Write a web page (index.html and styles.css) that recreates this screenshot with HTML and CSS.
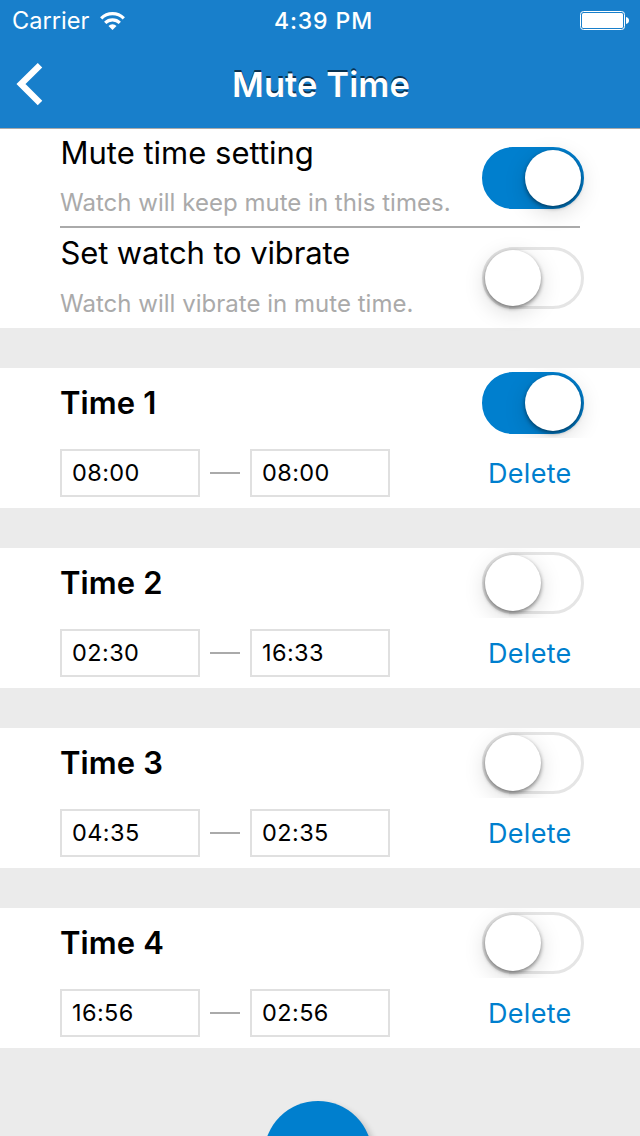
FILE: index.html
```html
<!DOCTYPE html>
<html lang="en"><head><meta charset="utf-8"><title>Mute Time</title><link rel="stylesheet" href="styles.css"></head>
<body><div class="screen">
<header class="header">
<div class="status"><div class="carrier"><span class="t carrier-name">Carrier</span>
<svg class="wifi" width="25" height="18" viewBox="0 0 25 18" fill="none" stroke="#fff" stroke-width="3.2"><path d="M1.200 6.300a16 16 0 0 1 22.600 0M5.200 10.900a10.400 10.400 0 0 1 14.600 0"/><path d="M12.500 18l-4-4a5.600 5.600 0 0 1 8 0z" fill="#fff" stroke="none"/></svg></div>
<span class="t clock">4:39 PM</span>
<svg class="battery" width="49" height="19" viewBox="0 0 49 19"><rect x=".5" y=".5" width="44" height="18" rx="3" fill="none" stroke="#fff"/><rect x="2" y="2" width="41" height="15" rx="1.500" fill="#fff"/><path d="M46 6q3 .8 3 3.500t-3 3.500z" fill="#fff"/></svg></div>
<div class="nav"><svg class="back" width="28" height="44" viewBox="0 0 28 44" fill="none" stroke="#fff" stroke-width="6.400"><path d="M24 2.300L5 21l19 19"/></svg><h1 class="t title">Mute Time</h1></div>
</header>
<main>
<section class="settings">
<div class="setting first"><div><div class="t label l1">Mute time setting</div><div class="t hint">Watch will keep mute in this times.</div></div><span class="switch on"></span></div>
<div class="setting"><div><div class="t label l2">Set watch to vibrate</div><div class="t hint h2">Watch will vibrate in mute time.</div></div><span class="switch"></span></div>
</section>
<section class="slot"><div class="head"><h2 class="t name">Time 1</h2><span class="switch on"></span></div><div class="range"><span class="time">08:00</span><i class="dash"></i><span class="time">08:00</span><a class="t delete">Delete</a></div></section>
<section class="slot"><div class="head"><h2 class="t name">Time 2</h2><span class="switch"></span></div><div class="range"><span class="time">02:30</span><i class="dash"></i><span class="time">16:33</span><a class="t delete">Delete</a></div></section>
<section class="slot"><div class="head"><h2 class="t name">Time 3</h2><span class="switch"></span></div><div class="range"><span class="time">04:35</span><i class="dash"></i><span class="time">02:35</span><a class="t delete">Delete</a></div></section>
<section class="slot"><div class="head"><h2 class="t name">Time 4</h2><span class="switch"></span></div><div class="range"><span class="time">16:56</span><i class="dash"></i><span class="time">02:56</span><a class="t delete">Delete</a></div></section>
</main><div class="add"></div>
</div></body></html>
```

FILE: styles.css
```css
*{box-sizing:border-box}
body{margin:0;background:#ebebeb;font-family:Inter,Roboto,sans-serif;color:#000}
h1,h2{margin:0}
.t{white-space:nowrap}
.screen{height:1136px;overflow:hidden;display:flex;flex-direction:column}
.header{height:128px;flex:none;background:#187fcb;color:#fff}
.status{height:41px;padding:1px 11px 0 12px;display:grid;grid-template-columns:1fr auto 1fr;align-items:center}
.carrier{display:flex;align-items:center;gap:11px;font-size:23.600px;line-height:40px}
.wifi{margin-top:-1px}
.clock{font-size:23px;font-weight:550;line-height:40px;letter-spacing:.900px;margin-left:6px}
.battery{justify-self:end;margin-top:-1px}
.nav{height:87px;padding:0 16px;display:grid;grid-template-columns:60px 1fr 60px;align-items:center}
.title{font-size:34.500px;font-weight:600;text-align:center;text-shadow:0 -2px 0 #0009;letter-spacing:.1px;margin-left:2px}
.settings{height:200px;background:#fff;padding:0 56px 0 60px;border-top:1px solid #aaa}
.setting{height:100px;display:flex;justify-content:space-between;align-items:center;position:relative}
.first{height:99px}
.first>div{margin-top:-1px}
.first .switch{margin-bottom:1px}
.first::after{content:"";position:absolute;left:0;right:4px;bottom:0;height:2px;background:#aaa}
.label{font-size:31px;line-height:50px}
.l1{padding-left:.500px}
.l2{padding-left:.500px;letter-spacing:-.130px}
.hint{font-size:24px;line-height:50px;color:#aaa;letter-spacing:.02px}
.h2{padding-top:1px;margin-bottom:-1px}
.switch{display:block;flex:none;width:102px;height:62px;border:3px solid #e5e5e5;border-radius:31px;background:#fff}
.switch::before{content:"";display:block;width:56px;height:56px;border-radius:50%;background:#fff;box-shadow:0 6px 22px #00000026,0 2px 4px #0007}
.on{background:#007fce;border-color:#007fce}
.on::before{margin-left:40px}
.slot{height:140px;margin-top:40px;background:#fff}
.head{height:70px;padding:0 56px 0 60px;display:flex;justify-content:space-between;align-items:center;overflow:hidden}
.name{font-size:31px;font-weight:600;padding-bottom:2px;letter-spacing:.1px}
.range{height:70px;padding-left:60px;display:flex;align-items:center}
.time{width:140px;height:48px;border:2px solid #e0e0e0;padding-left:10px;font-size:23.500px;letter-spacing:.400px;line-height:44px}
.dash{width:30px;height:2px;background:#aaa;margin:0 10px}
.delete{font-size:27px;letter-spacing:.300px;color:#007fce;margin-left:98px}
.add{width:108px;height:108px;border-radius:50%;background:#007fce;margin:53px 0 0 264px;flex:none;box-shadow:4px 4px 6px #0003}
```
